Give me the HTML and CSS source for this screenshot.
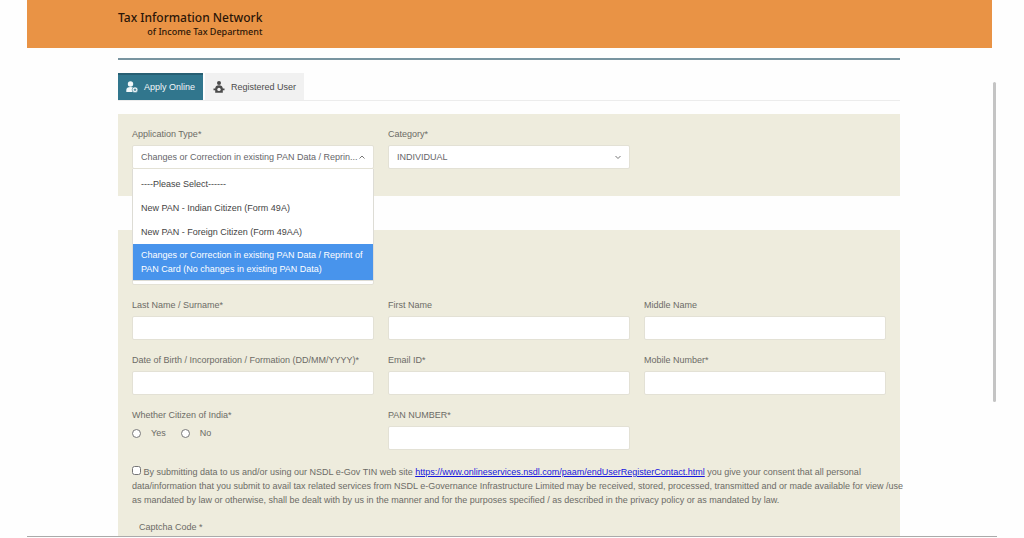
FILE: index.html
```html
<!DOCTYPE html>
<html lang="en">
<head>
<meta charset="utf-8">
<title>Tax Information Network</title>
<link rel="stylesheet" href="styles.css">
</head>
<body>
<div class="page">
  <header class="banner">
    <div class="brand">
      <div class="brand-name">Tax Information Network</div>
      <div class="brand-sub">of Income Tax Department</div>
    </div>
  </header>
  <main class="content">
    <nav class="tabs">
      <button class="tab tab-active" type="button">
        <svg class="tab-icon" viewBox="0 0 12 12" aria-hidden="true">
          <circle cx="4.500" cy="3" r="2.700" fill="currentColor"/>
          <path d="M.3 11V9c0-2 1.500-3 4.200-3 1.400 0 2.500.3 3.200.9L7.500 11z" fill="currentColor"/>
          <circle cx="9" cy="8.800" r="2.900" fill="currentColor" stroke="#31768d" stroke-width=".6"/>
          <path d="M9 7.500v2.600M7.700 8.800h2.600" stroke="#31768d" stroke-width=".9"/>
        </svg>
        Apply Online
      </button>
      <button class="tab" type="button">
        <svg class="tab-icon" viewBox="0 0 12 12" aria-hidden="true">
          <circle cx="6" cy="2.100" r="2" fill="currentColor"/>
          <path d="M6 4.300c2.400 0 3.600 1.200 3.800 3.200H11.500v1.800H9.800V11.800H2.200V9.300H.5V7.500h1.700C2.400 5.500 3.600 4.300 6 4.300z" fill="currentColor"/>
          <circle cx="6" cy="8.400" r="1.700" fill="#f1f1f1"/>
        </svg>
        Registered User
      </button>
    </nav>

    <form class="form">
      <section class="panel panel-type">
        <div class="field">
          <label for="app-type">Application Type*</label>
          <div class="picker">
            <select id="app-type" class="control"><option>Changes or Correction in existing PAN Data / Reprin...</option></select>
            <svg class="chevron" viewBox="0 0 8 8" aria-hidden="true"><path d="M1.500 5.500 4 3l2.500 2.500"/></svg>
            <ul class="menu">
              <li class="menu-item">----Please Select------</li>
              <li class="menu-item">New PAN - Indian Citizen (Form 49A)</li>
              <li class="menu-item">New PAN - Foreign Citizen (Form 49AA)</li>
              <li class="menu-item menu-selected">Changes or Correction in existing PAN Data / Reprint of PAN Card (No changes in existing PAN Data)</li>
            </ul>
          </div>
        </div>
        <div class="field">
          <label for="category">Category*</label>
          <div class="picker">
            <select id="category" class="control"><option>INDIVIDUAL</option></select>
            <svg class="chevron" viewBox="0 0 8 8" aria-hidden="true"><path d="M1.500 3 4 5.500 6.500 3"/></svg>
          </div>
        </div>
      </section>

      <section class="panel panel-person">
        <div class="field field-first">
          <select class="control" aria-label="Title"><option></option></select>
        </div>
        <div class="field"><label for="last">Last Name / Surname*</label><input id="last" class="control" type="text"></div>
        <div class="field"><label for="first">First Name</label><input id="first" class="control" type="text"></div>
        <div class="field"><label for="middle">Middle Name</label><input id="middle" class="control" type="text"></div>
        <div class="field"><label for="dob">Date of Birth / Incorporation / Formation (DD/MM/YYYY)*</label><input id="dob" class="control" type="text"></div>
        <div class="field"><label for="email">Email ID*</label><input id="email" class="control" type="text"></div>
        <div class="field"><label for="mobile">Mobile Number*</label><input id="mobile" class="control" type="text"></div>
        <fieldset class="field">
          <legend>Whether Citizen of India*</legend>
          <div class="radios">
            <label class="radio"><input type="radio" name="citizen">Yes</label>
            <label class="radio"><input type="radio" name="citizen">No</label>
          </div>
        </fieldset>
        <div class="field"><label for="pan">PAN NUMBER*</label><input id="pan" class="control" type="text"></div>
        <div class="consent">
          <input id="consent" class="check" type="checkbox">
          <label for="consent">By submitting data to us and/or using our NSDL e-Gov TIN web site <a href="#">https://www.onlineservices.nsdl.com/paam/endUserRegisterContact.html</a> you give your consent that all personal<br>data/information that you submit to avail tax related services from NSDL e-Governance Infrastructure Limited may be received, stored, processed, transmitted and or made available for view /use as mandated by law or otherwise, shall be dealt with by us in the manner and for the purposes specified / as described in the privacy policy or as mandated by law.</label>
        </div>
        <div class="captcha">Captcha Code *</div>
      </section>
    </form>
  </main>
  <div class="scroll-thumb"></div>
</div>
</body>
</html>
```
FILE: styles.css
```css
* { box-sizing: border-box; }

body {
  margin: 0;
  background: #fefefe;
  color: #6c6b66;
  font: 9px/14px "Liberation Sans", Arial, sans-serif;
}

.page {
  position: relative;
  display: flex;
  flex-direction: column;
  height: calc(100vh - 1px);
  margin: 0 27px;
  overflow: hidden;
  border-bottom: 1px solid #aaa;
}

.banner {
  flex: none;
  display: flex;
  margin-right: 5px;
  padding: 10px 91px;
  background: #e99345;
  color: #2b1608;
  font-family: "Noto Sans", sans-serif;
}

.brand { text-align: right; }
.brand-name { font-size: 12px; font-weight: 500; line-height: 16px; }
.brand-sub { font-size: 9px; font-weight: 500; line-height: 12px; }

.content {
  flex: none;
  margin: 10px 97px 0 91px;
  border-top: 2px solid #7894a0;
}

.tabs {
  display: flex;
  gap: 2px;
  margin-top: 13px;
  border-bottom: 1px solid #ececec;
}

.tab {
  display: flex;
  align-items: center;
  gap: 6px;
  height: 27px;
  padding: 0 8px;
  border: 0;
  background: #f1f1f1;
  color: #4c4c4c;
  font: inherit;
}
.tab-active { box-shadow: inset 0 2px #285f73; background: #31768d; color: #f2f8fa; }
.tab-icon { width: 12px; height: 12px; }

.form { margin-top: 13px; }

.panel {
  display: grid;
  grid-template-columns: repeat(3, minmax(0, 1fr));
  gap: 13px 14px;
  padding: 13px 14px 27px;
  background: #eeecdd;
}
.panel-person { margin-top: 34px; }

.field {
  display: flex;
  flex-direction: column;
  gap: 3px;
  min-width: 0;
  margin: 0;
  padding: 0;
  border: 0;
  line-height: 15px;
}
.field-first { grid-column: 1 / -1; padding-top: 18px; }
.field-first .control { width: calc((100% - 28px) / 3); }
legend { padding: 0; }

.control {
  width: 100%;
  height: 24px;
  padding: 0 8px;
  appearance: none;
  border: 1px solid #e3e1d5;
  border-radius: 2px;
  background: #fff;
  color: #66666a;
  font: inherit;
}

.picker { position: relative; display: flex; }
.chevron {
  position: absolute;
  top: 8px;
  right: 8px;
  width: 8px;
  height: 8px;
  fill: none;
  stroke: #777;
}

.menu {
  position: absolute;
  z-index: 2;
  top: 24px;
  left: 0;
  right: 0;
  margin: 0;
  padding: 3px 0 0;
  border: 1px solid #dddcd5;
  border-top: 0;
  background: #fff;
  color: #444;
  list-style: none;
}
.menu-item { padding: 5px 8px; line-height: 14px; }
.menu-selected { padding: 4px 8px; background: #4894ec; color: #fff; }

.radios { display: flex; gap: 15px; padding-top: 3px; }
.radio { display: flex; align-items: center; gap: 10px; }
.radio input { width: 9px; height: 9px; margin: 0; }

.consent { grid-column: 1 / -1; margin: 2px -20px 0 0; }
.check { width: 9px; height: 9px; margin: 0; }
.consent a { color: #1515dd; }

.captcha { grid-column: 1 / -1; padding-left: 7px; }

.scroll-thumb {
  position: absolute;
  top: 82px;
  right: 1px;
  width: 3px;
  height: 320px;
  border-radius: 2px;
  background: #c4c4c4;
}
```
